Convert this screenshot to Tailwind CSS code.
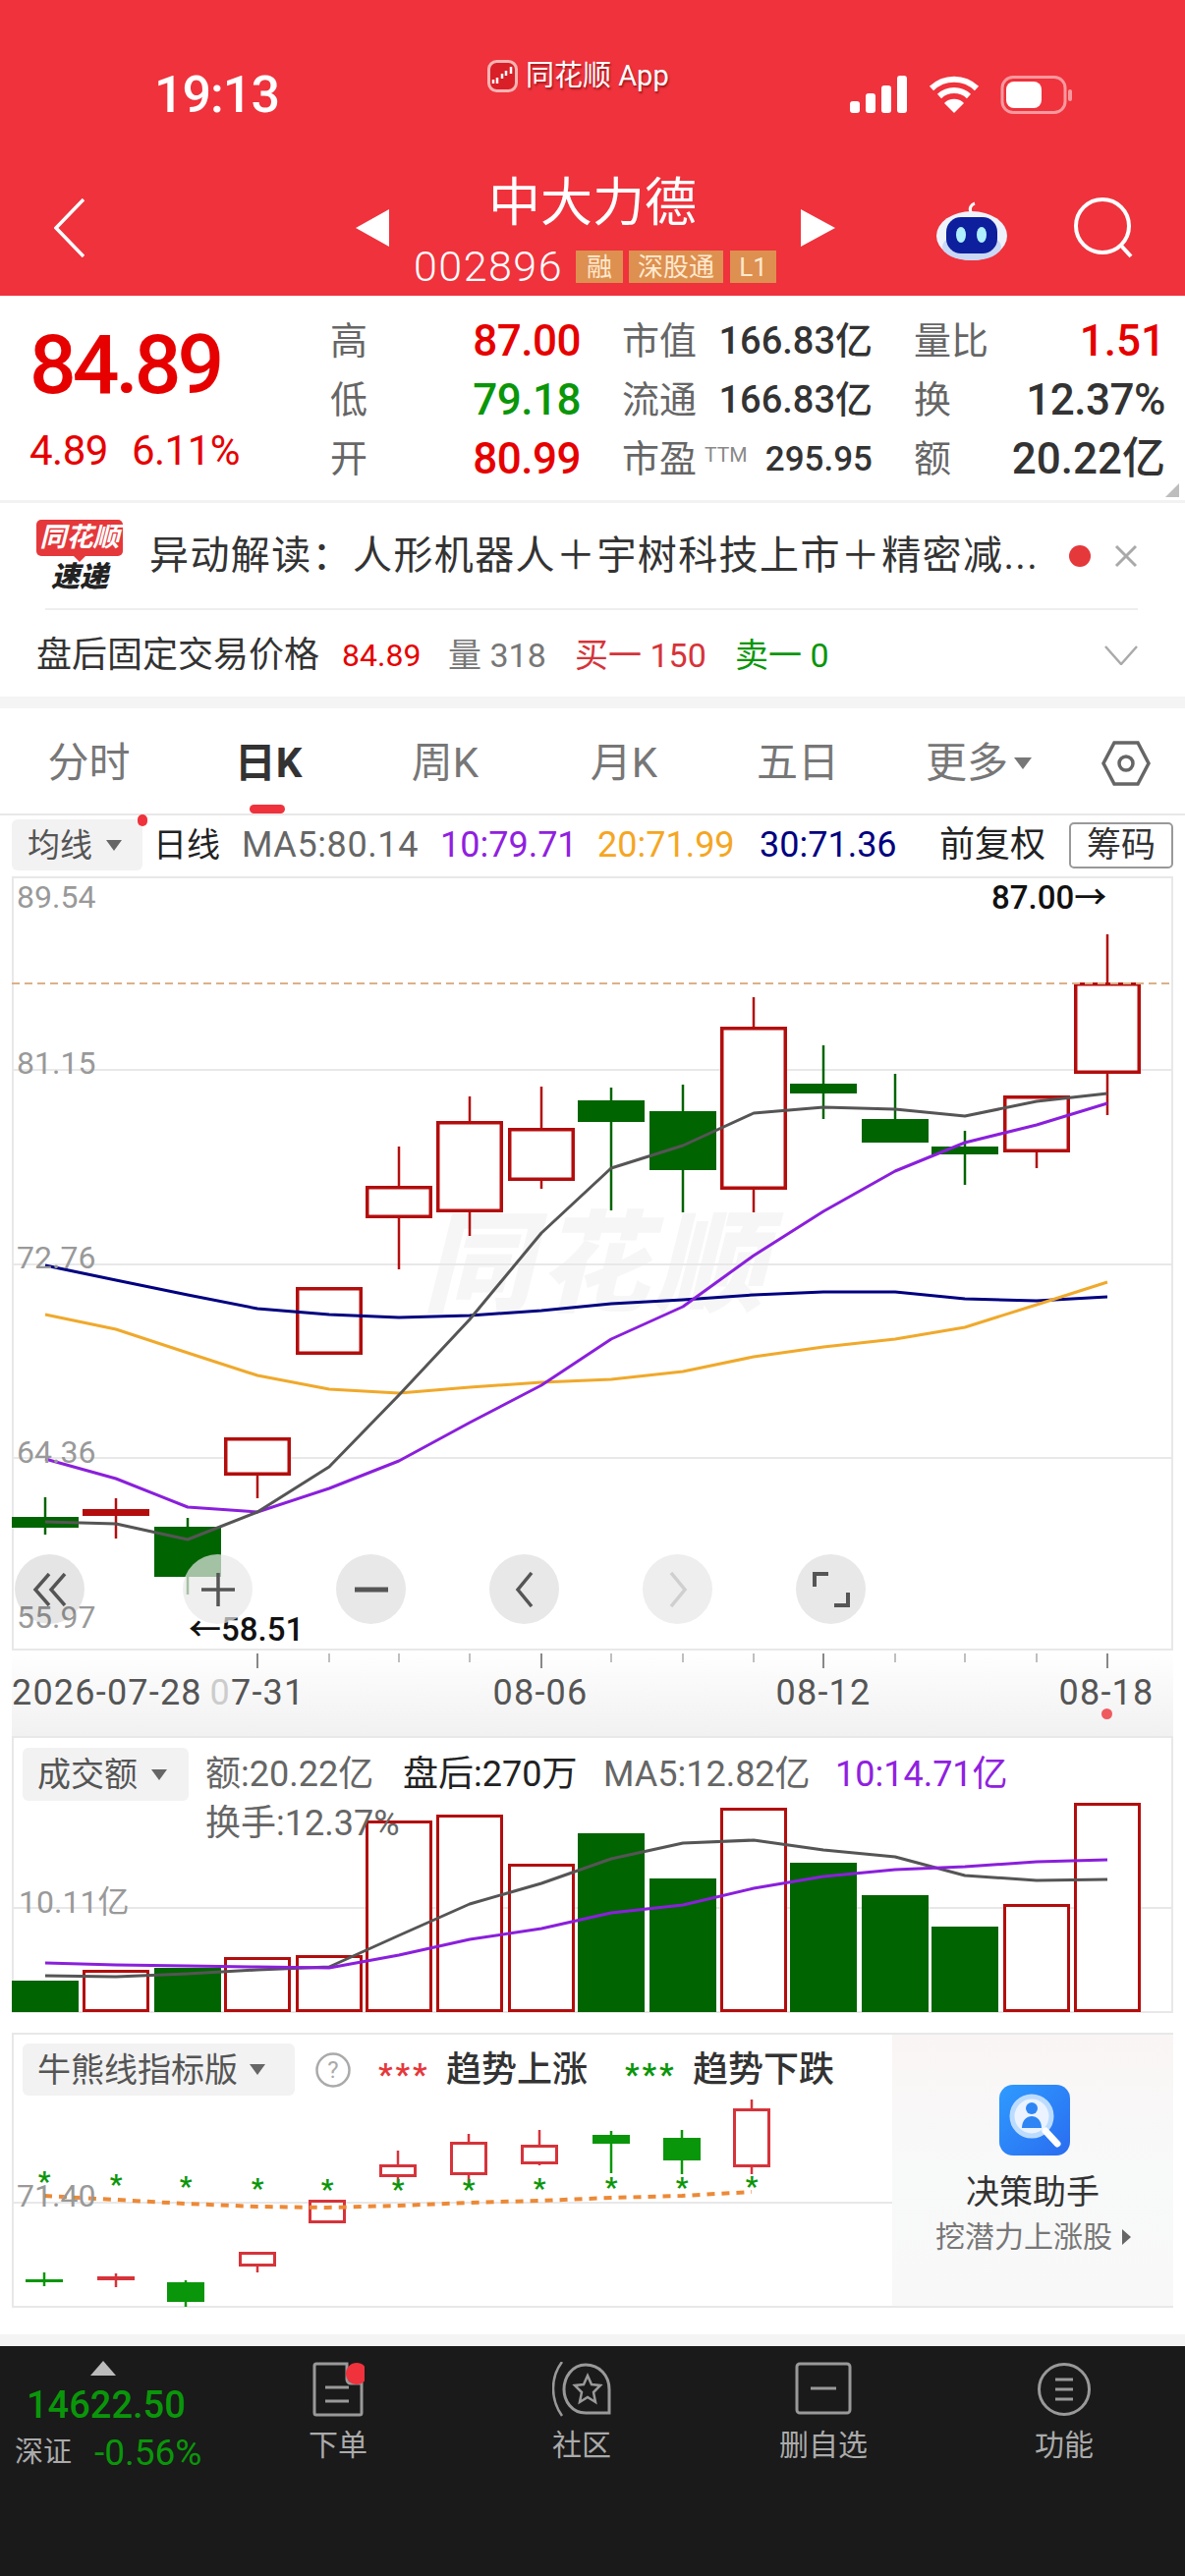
<!DOCTYPE html>
<html lang="zh-CN">
<head>
<meta charset="UTF-8">
<title>中大力德 - 日K</title>
<script src="https://cdn.jsdelivr.net/npm/@tailwindcss/browser@4"></script>
</head>
<body class="bg-white w-[1206px] h-[2622px] overflow-hidden leading-none font-['Roboto','Noto_Sans_CJK_SC',sans-serif]">

<!-- red header -->
<header class="h-[301px] bg-[#ef323c] text-white flex flex-col">
  <div class="flex items-center h-[74px] mt-[60px]">
    <div class="ml-[157px] w-[339px] text-[52px] font-medium tracking-[-1px]">19:13</div>
    <div class="w-[369px] flex items-center gap-[8px] -mt-[40px] text-[29px] [text-shadow:1px_2px_2px_rgba(90,0,0,.55)]">
      <svg width="31" height="33" viewBox="0 0 31 33"><rect x="1.5" y="1.5" width="28" height="30" rx="8" fill="#d92028" stroke="#f8b4b4" stroke-width="3"/><path d="M6 24v-4M10 24v-6M15 19v-5M19 16v-5M24 14V7" stroke="#fff" stroke-width="2.5"/></svg>
      <span>同花顺 App</span>
    </div>
    <svg width="227" height="40" viewBox="0 0 227 40">
      <rect x="0" y="26" width="10" height="12" rx="3" fill="#fff"/><rect x="16" y="18" width="10" height="20" rx="3" fill="#fff"/><rect x="32" y="10" width="10" height="28" rx="3" fill="#fff"/><rect x="48" y="0" width="10" height="38" rx="3" fill="#fff"/>
      <path d="M83 13a33 33 0 0 1 46 0M91 21a22 22 0 0 1 30 0" fill="none" stroke="#fff" stroke-width="6"/><path d="M96 28a14 14 0 0 1 20 0l-10 10z" fill="#fff"/>
      <rect x="155" y="1.5" width="64" height="36" rx="11" fill="none" stroke="#fff" stroke-opacity=".5" stroke-width="3"/><rect x="159" y="6" width="36" height="27" rx="8" fill="#fff"/><rect x="222" y="14" width="4" height="12" rx="2" fill="#fff" fill-opacity=".5"/>
    </svg>
  </div>
  <div class="flex items-center h-[120px] mt-[38px]">
    <svg class="ml-[55px]" width="31" height="60" viewBox="0 0 31 60"><path d="M30 1 2 30l28 29" fill="none" stroke="#fff" stroke-width="3.5"/></svg>
    <svg class="ml-[276px]" width="34" height="38" viewBox="0 0 34 38"><path d="M34 0v38L0 19z" fill="#fff"/></svg>
    <div class="w-[419px] flex flex-col items-center">
      <div class="text-[53px] font-normal h-[62px] leading-[62px] -ml-[5px]">中大力德</div>
      <div class="flex items-center mt-[17px] h-[33px]">
        <span class="text-[43px] font-light tracking-[1.5px] mr-[13px]">002896</span>
        <span class="bg-[#dd9050] text-[#ffe9cf] text-[26px] h-[33px] w-[48px] flex items-center justify-center mr-[6px]">融</span>
        <span class="bg-[#dd9050] text-[#ffe9cf] text-[26px] h-[33px] w-[96px] flex items-center justify-center mr-[7px]">深股通</span>
        <span class="bg-[#dd9050] text-[#ffe9cf] text-[26px] h-[33px] w-[47px] flex items-center justify-center">L1</span>
      </div>
    </div>
    <svg width="35" height="38" viewBox="0 0 35 38"><path d="M0 0v38l35-19z" fill="#fff"/></svg>
    <svg class="ml-[102px]" width="75" height="67" viewBox="0 0 75 67">
      <path d="M37 18c-4-5 0-9 3-10" fill="none" stroke="#fff" stroke-width="3"/>
      <ellipse cx="37" cy="41" rx="36" ry="25" fill="#eef2fb"/><ellipse cx="37" cy="52" rx="30" ry="14" fill="#c9d8f5"/>
      <rect x="11" y="22" width="52" height="37" rx="15" fill="#0d1f9c"/>
      <ellipse cx="26" cy="40" rx="5" ry="8" fill="#aef0ff"/><ellipse cx="47" cy="40" rx="5" ry="8" fill="#aef0ff"/>
    </svg>
    <svg class="ml-[65px]" width="62" height="62" viewBox="0 0 62 62"><circle cx="30" cy="29" r="27" fill="none" stroke="#fff" stroke-width="4"/><path d="m49 49 10 11" stroke="#fff" stroke-width="4"/></svg>
  </div>
</header>

<!-- quote block -->
<section class="relative h-[211px] flex border-b-[3px] border-[#f2f2f2]">
  <div class="w-[336px] pl-[30px] text-[#e60000]">
    <div class="mt-[28px] text-[84px] font-medium tracking-[-4px] h-[86px] leading-[86px]">84.89</div>
    <div class="mt-[23px] text-[42px] flex gap-[24px] tracking-[-.5px]"><span>4.89</span><span>6.11%</span></div>
  </div>
  <div class="grid grid-cols-[255px_255px_256px] gap-x-[42px] auto-rows-[60px] pt-[16px] items-center text-[44px] font-medium text-[#333]">
    <div class="flex justify-between items-center"><span class="text-[38px] font-normal text-[#666]">高</span><span class="text-[#e60000] tracking-[-.5px]">87.00</span></div>
    <div class="flex justify-between items-center"><span class="text-[38px] font-normal text-[#666]">市值</span><span class="text-[38px]">166.83亿</span></div>
    <div class="flex justify-between items-center"><span class="text-[38px] font-normal text-[#666]">量比</span><span class="text-[#e60000]">1.51</span></div>
    <div class="flex justify-between items-center"><span class="text-[38px] font-normal text-[#666]">低</span><span class="text-[#0a960a] tracking-[-.5px]">79.18</span></div>
    <div class="flex justify-between items-center"><span class="text-[38px] font-normal text-[#666]">流通</span><span class="text-[38px]">166.83亿</span></div>
    <div class="flex justify-between items-center"><span class="text-[38px] font-normal text-[#666]">换</span><span class="tracking-[-.5px]">12.37%</span></div>
    <div class="flex justify-between items-center"><span class="text-[38px] font-normal text-[#666]">开</span><span class="text-[#e60000] tracking-[-.5px]">80.99</span></div>
    <div class="flex items-center"><span class="text-[38px] font-normal text-[#666]">市盈</span><span class="text-[21px] font-normal text-[#888] ml-[8px] mb-[8px]">TTM</span><span class="text-[35px] ml-auto">295.95</span></div>
    <div class="flex justify-between items-center"><span class="text-[38px] font-normal text-[#666]">额</span><span>20.22亿</span></div>
  </div>
  <div class="absolute right-[6px] bottom-[3px] w-0 h-0 border-l-[14px] border-l-transparent border-b-[14px] border-b-[#bdbdbd]"></div>
</section>

<!-- news + after-hours -->
<section class="h-[197px] pl-[37px] pr-[48px]">
  <div class="flex items-center h-[107px]">
    <div class="w-[88px] flex flex-col items-center">
      <div class="relative w-[88px] h-[37px] rounded-[5px] bg-[#e5383b] text-white text-[27px] font-bold italic flex items-center justify-center">同花顺<i class="absolute -bottom-[6px] w-0 h-0 border-x-[6px] border-x-transparent border-t-[6px] border-t-[#e5383b]"></i></div>
      <div class="mt-[7px] text-[29px] font-black italic text-[#222]">速递</div>
    </div>
    <div class="ml-[27px] w-[910px] text-[40px] text-[#333] tracking-[1.4px] whitespace-nowrap">异动解读：人形机器人＋宇树科技上市＋精密减...</div>
    <div class="ml-[27px] w-[22px] h-[22px] rounded-full bg-[#e5383b]"></div>
    <svg class="ml-[24px]" width="24" height="24" viewBox="0 0 24 24"><path d="m2 2 20 20M22 2 2 22" stroke="#a9a9a9" stroke-width="3"/></svg>
  </div>
  <div class="h-[2px] bg-[#eee] ml-[9px]"></div>
  <div class="flex items-center h-[88px] pt-[4px] text-[36px] text-[#333]">
    <span class="w-[311px]">盘后固定交易价格</span>
    <span class="text-[32px] text-[#e60000] w-[108px]">84.89</span>
    <span class="text-[34px] text-[#777] w-[129px]">量 318</span>
    <span class="text-[34px] text-[#d6333a] w-[163px]">买一 150</span>
    <span class="text-[34px] text-[#0a960a]">卖一 0</span>
    <svg class="ml-auto" width="34" height="20" viewBox="0 0 34 20"><path d="m1 1 16 18L33 1" fill="none" stroke="#aaa" stroke-width="2.5"/></svg>
  </div>
</section>
<div class="h-[12px] bg-[#f4f4f4]"></div>

<!-- period tabs -->
<nav class="h-[109px] border-b-2 border-[#e8e8e8] grid grid-cols-[181px_184px_176px_188px_166px_202px_98px] items-center text-center text-[42px] text-[#777] pt-[4px] relative">
  <span>分时</span>
  <span class="relative font-bold text-[#333]">日K<i class="absolute left-[73px] top-[63px] w-[36px] h-[9px] rounded-full bg-[#ef323c]"></i></span>
  <span>周K</span>
  <span>月K</span>
  <span>五日</span>
  <span class="flex items-center justify-center gap-[6px]">更多<i class="w-0 h-0 border-x-[9px] border-x-transparent border-t-[12px] border-t-[#777]"></i></span>
  <svg class="mx-auto" width="50" height="46" viewBox="0 0 50 46"><path d="M13 2h24l11 21-11 21H13L2 23z" fill="none" stroke="#666" stroke-width="3.5"/><circle cx="25" cy="23" r="7" fill="none" stroke="#666" stroke-width="3.5"/></svg>
</nav>

<!-- MA legend row -->
<div class="relative flex items-center h-[60px] pl-[12px] text-[36px] whitespace-nowrap">
  <div class="relative h-[52px] w-[133px] rounded-[6px] bg-[#f2f2f2] flex items-center pl-[16px] gap-[14px] text-[33px] text-[#555]">均线<i class="w-0 h-0 border-x-[8px] border-x-transparent border-t-[11px] border-t-[#666]"></i><i class="absolute -right-[5px] -top-[5px] w-[10px] h-[12px] rounded-full bg-[#ef323c]"></i></div>
  <span class="ml-[11px] w-[90px] text-[34px] text-[#222]">日线</span>
  <span class="w-[202px] tracking-[.6px] text-[#666]">MA5:80.14</span>
  <span class="w-[160px] text-[#9020e0]">10:79.71</span>
  <span class="w-[165px] text-[#f5a623]">20:71.99</span>
  <span class="w-[183px] text-[#000080]">30:71.36</span>
  <span class="w-[132px] text-[#222]">前复权</span>
  <span class="w-[106px] h-[47px] flex items-center justify-center border-2 border-[#999] rounded-[5px] text-[35px] text-[#333]">筹码</span>
</div>

<!-- candle chart -->
<div class="relative h-[788px] mx-[12px] mt-[2px] border-2 border-[#e8e8e8]">
  <div class="absolute left-[416px] top-[338px] text-[112px] font-black italic text-[#f6f6f6] tracking-[6px]">同花顺</div>
  <svg id="kline" class="absolute -left-[2px] -top-[2px]" width="1182" height="788" viewBox="12 892 1182 788"></svg>
  <span class="absolute left-[3px] top-[3px] text-[32px] text-[#999]">89.54</span>
  <span class="absolute left-[3px] top-[172px] text-[32px] text-[#999]">81.15</span>
  <span class="absolute left-[3px] top-[370px] text-[32px] text-[#999]">72.76</span>
  <span class="absolute left-[3px] top-[568px] text-[32px] text-[#999]">64.36</span>
  <span class="absolute left-[3px] top-[736px] text-[32px] text-[#999]">55.97</span>
  <span class="absolute left-[995px] top-[3px] text-[33px] font-medium text-[#111]">87.00→</span>
  <span class="absolute left-[178px] top-[748px] text-[33px] font-medium text-[#111]">←58.51</span>
  <!-- zoom / pan controls -->
  <div class="absolute left-[1px] top-[688px] flex gap-[85px]">
    <div class="w-[71px] h-[71px] rounded-full bg-black/10 flex items-center justify-center"><svg width="36" height="34" viewBox="0 0 36 34"><path d="M17 1 3 17l14 16M33 1 19 17l14 16" fill="none" stroke="#555" stroke-width="3.5"/></svg></div>
    <div class="w-[71px] h-[71px] rounded-full bg-[#e8e8e8]/70 flex items-center justify-center ml-[15px]"><svg width="34" height="34" viewBox="0 0 34 34"><path d="M17 0v34M0 17h34" stroke="#555" stroke-width="3.5"/></svg></div>
    <div class="w-[71px] h-[71px] rounded-full bg-[#e8e8e8] flex items-center justify-center"><svg width="34" height="6" viewBox="0 0 34 6"><path d="M0 3h34" stroke="#555" stroke-width="5"/></svg></div>
    <div class="w-[71px] h-[71px] rounded-full bg-[#e8e8e8] flex items-center justify-center"><svg width="20" height="36" viewBox="0 0 20 36"><path d="M17 1 3 18l14 17" fill="none" stroke="#555" stroke-width="3.5"/></svg></div>
    <div class="w-[71px] h-[71px] rounded-full bg-[#eeeeee] flex items-center justify-center"><svg width="20" height="36" viewBox="0 0 20 36"><path d="m3 1 14 17L3 35" fill="none" stroke="#cfcfcf" stroke-width="3.5"/></svg></div>
    <div class="w-[71px] h-[71px] rounded-full bg-[#e8e8e8] flex items-center justify-center"><svg width="38" height="36" viewBox="0 0 38 36"><path d="M2 15V2h14M36 21v13H22" fill="none" stroke="#555" stroke-width="4"/></svg></div>
  </div>
</div>

<!-- date axis -->
<div class="relative h-[87px] mx-[12px] bg-gradient-to-b from-white to-[#f1f1f1] text-[36px] tracking-[1.2px] text-[#555] whitespace-nowrap">
  <svg class="absolute left-0 top-0" width="1182" height="20" viewBox="12 1680 1182 20"><path d="M262 1683v15M551 1683v15M838 1683v15M1127 1683v15" stroke="#888" stroke-width="2"/><path d="M335 1683v9M406 1683v9M478 1683v9M622 1683v9M695 1683v9M767 1683v9M911 1683v9M982 1683v9M1055 1683v9" stroke="#aaa" stroke-width="1.5"/></svg>
  <span class="absolute left-0 top-[25px]">2026-07-28</span>
  <span class="absolute left-[250px] top-[25px] -translate-x-1/2"><span class="text-[#ccc]">0</span>7-31</span>
  <span class="absolute left-[538px] top-[25px] -translate-x-1/2">08-06</span>
  <span class="absolute left-[826px] top-[25px] -translate-x-1/2">08-12</span>
  <span class="absolute left-[1114px] top-[25px] -translate-x-1/2">08-18</span>
  <i class="absolute left-[1109px] top-[59px] w-[11px] h-[11px] rounded-full bg-[#ef5a5f]"></i>
</div>

<!-- turnover panel -->
<div class="relative h-[282px] mx-[12px] border-x-2 border-y-2 border-[#e8e8e8]">
  <svg id="vol" class="absolute -left-[2px] -top-[2px]" width="1182" height="282" viewBox="12 1767 1182 282"></svg>
  <div class="relative flex items-center h-[54px] mt-[10px] text-[36px] text-[#666] whitespace-nowrap">
    <div class="ml-[9px] mr-[17px] w-[169px] h-[54px] rounded-[6px] bg-[#f2f2f2] flex items-center pl-[15px] gap-[14px] text-[34px] text-[#555]">成交额<i class="w-0 h-0 border-x-[8px] border-x-transparent border-t-[11px] border-t-[#666]"></i></div>
    <span class="w-[201px]">额:20.22亿</span>
    <span class="w-[204px] text-[#222]">盘后:270万</span>
    <span class="w-[236px]">MA5:12.82亿</span>
    <span class="text-[#9020e0]">10:14.71亿</span>
  </div>
  <span class="absolute left-[195px] top-[69px] text-[36px] text-[#666]">换手:12.37%</span>
  <span class="absolute left-[5px] top-[151px] text-[32px] text-[#999]">10.11亿</span>
</div>

<!-- bull/bear indicator panel -->
<div class="h-[280px] mx-[12px] mt-[20px] border-y-2 border-l-2 border-[#e8e8e8] flex">
  <div class="relative w-[894px]">
    <svg id="bull" class="absolute -left-[2px] -top-[2px]" width="896" height="280" viewBox="12 2069 896 280"></svg>
    <div class="relative flex items-center h-[53px] mt-[9px] text-[36px] whitespace-nowrap">
      <div class="ml-[9px] w-[277px] h-[53px] rounded-[6px] bg-[#f2f2f2] flex items-center pl-[15px] gap-[12px] text-[34px] text-[#555]">牛熊线指标版<i class="w-0 h-0 border-x-[8px] border-x-transparent border-t-[11px] border-t-[#666]"></i></div>
      <svg class="ml-[21px]" width="36" height="38" viewBox="0 0 36 38"><circle cx="18" cy="19" r="16.5" fill="none" stroke="#aaa" stroke-width="2.5"/><text x="18" y="27" text-anchor="middle" font-size="24" fill="#aaa">?</text></svg>
      <span class="ml-[28px] text-[#e5383b] font-bold w-[69px] text-[32px] tracking-[3px] mt-[8px]">***</span>
      <span class="font-medium text-[#333]">趋势上涨</span>
      <span class="ml-[38px] text-[#0a960a] font-bold w-[69px] text-[32px] tracking-[3px] mt-[8px]">***</span>
      <span class="font-medium text-[#333]">趋势下跌</span>
    </div>
    <span class="absolute left-[3px] top-[148px] text-[32px] text-[#999]">71.40</span>
  </div>
  <aside class="flex-1 bg-gradient-to-b from-[#faf5f5] via-[#f8f9f9] to-[#f8f8f8] flex flex-col items-center pt-[51px]">
    <svg class="ml-[3px]" width="72" height="72" viewBox="0 0 72 72"><defs><linearGradient id="aiBlue" x1="0" y1="0" x2="1" y2="1"><stop offset="0" stop-color="#2e9bff"/><stop offset="1" stop-color="#2a6cf0"/></linearGradient></defs><rect width="72" height="72" rx="14" fill="url(#aiBlue)"/><circle cx="33" cy="32" r="20" fill="#eaf3ff" stroke="#bcdcff" stroke-width="5"/><circle cx="33" cy="24" r="6" fill="#2e86f5"/><path d="M23 44c0-8 5-12 10-12s10 4 10 12z" fill="#2e86f5"/><path d="m47 47 12 13" stroke="#fff" stroke-width="7" stroke-linecap="round"/></svg>
    <div class="mt-[20px] text-[34px] text-[#333]">决策助手</div>
    <div class="mt-[14px] ml-[1px] text-[30px] text-[#777] flex items-center gap-[10px]">挖潜力上涨股<i class="w-0 h-0 border-y-[8px] border-y-transparent border-l-[9px] border-l-[#666]"></i></div>
  </aside>
</div>

<div class="h-[27px]"></div>
<div class="h-[12px] bg-[#f4f4f4]"></div>

<!-- bottom bar -->
<footer class="h-[234px] bg-[#1a1a1a] grid grid-cols-[220px_248px_248px_244px_246px] text-[#aaa] text-[30px]">
  <div class="flex flex-col pl-[15px] pt-[15px]">
    <i class="ml-[77px] w-0 h-0 border-x-[13px] border-x-transparent border-b-[15px] border-b-[#bbb]"></i>
    <span class="mt-[11px] ml-[12px] text-[38px] font-medium text-[#0a960a]">14622.50</span>
    <div class="mt-[11px] flex items-center"><span class="text-[29px] w-[81px]">深证</span><span class="text-[37px] text-[#0a960a]">-0.56%</span></div>
  </div>
  <div class="flex flex-col items-center pt-[16px]">
    <svg width="54" height="56" viewBox="0 0 54 56"><path d="M36 2H5a2 2 0 0 0-2 2v48a2 2 0 0 0 2 2h44a2 2 0 0 0 2-2V22H40a4 4 0 0 1-4-4z" fill="none" stroke="#999" stroke-width="3"/><path d="M14 26h24M14 40h24" stroke="#999" stroke-width="3"/><circle cx="46" cy="12" r="11" fill="#ef323c"/></svg>
    <span class="mt-[14px]">下单</span>
  </div>
  <div class="flex flex-col items-center pt-[16px]">
    <svg width="60" height="56" viewBox="0 0 60 56"><path d="M10 0C-2 16-2 38 10 55" fill="none" stroke="#999" stroke-width="2.5"/><path d="M58 52H34C20 52 12 40 12 28S20 3 34 3s24 11 24 25z" fill="none" stroke="#999" stroke-width="3"/><path d="m36 14 4 9 9 1-7 7 2 10-8-5-8 5 2-10-7-7 9-1z" fill="none" stroke="#999" stroke-width="2.5"/></svg>
    <span class="mt-[14px]">社区</span>
  </div>
  <div class="flex flex-col items-center pt-[16px]">
    <svg width="58" height="54" viewBox="0 0 58 54"><rect x="2" y="2" width="54" height="50" rx="3" fill="none" stroke="#999" stroke-width="3"/><path d="M16 27h26" stroke="#999" stroke-width="3"/></svg>
    <span class="mt-[16px]">删自选</span>
  </div>
  <div class="flex flex-col items-center pt-[16px]">
    <svg width="56" height="56" viewBox="0 0 56 56"><circle cx="28" cy="28" r="25.5" fill="none" stroke="#999" stroke-width="3"/><path d="M19 18h18M19 28h18M19 38h18" stroke="#999" stroke-width="3"/></svg>
    <span class="mt-[14px]">功能</span>
  </div>
</footer>

<script>
  const NS = 'http://www.w3.org/2000/svg';
  const RED = '#b30d0d', GREEN = '#006400';
  const XS = [46,118,191,262,335,406,478,551,622,695,767,838,911,982,1055,1127];

  function el(svg, tag, attrs, text) {
    const e = document.createElementNS(NS, tag);
    for (const k in attrs) e.setAttribute(k, attrs[k]);
    if (text) e.textContent = text;
    svg.appendChild(e);
  }
  function hline(svg, y, x1, x2, color, extra) {
    el(svg, 'line', Object.assign({x1: x1, x2: x2, y1: y, y2: y, stroke: color, 'stroke-width': 2}, extra || {}));
  }
  function poly(svg, xs, ys, color, width, extra) {
    const pts = ys.map((y, i) => xs[i] + ',' + y).join(' ');
    el(svg, 'polyline', Object.assign({points: pts, fill: 'none', stroke: color, 'stroke-width': width, 'stroke-linejoin': 'round'}, extra || {}));
  }
  // one candle: x, body top, body bottom, wick top, wick bottom, up?
  function candle(svg, c, w, red, green, sw) {
    const [x, top, bot, wt, wb, up] = c;
    const color = up ? red : green;
    el(svg, 'line', {x1: x, x2: x, y1: wt, y2: wb, stroke: color, 'stroke-width': 2.5});
    if (up) el(svg, 'rect', {x: x - w/2 + sw/2, y: top + sw/2, width: w - sw, height: Math.max(bot - top - sw, 1), fill: '#fff', stroke: color, 'stroke-width': sw});
    else el(svg, 'rect', {x: x - w/2, y: top, width: w, height: Math.max(bot - top, 3), fill: color});
  }

  // daily K chart
  const kline = document.getElementById('kline');
  [1089, 1287, 1484].forEach(y => hline(kline, y, 12, 1194, '#e8e8e8'));
  [[46,1544,1555,1524,1562,0],[118,1536,1543,1525,1566,1],[191,1554,1605,1545,1623,0],[262,1463,1502,1463,1525,1],
   [335,1310,1379,1310,1379,1],[406,1207,1240,1167,1292,1],[478,1141,1234,1116,1258,1],[551,1148,1202,1106,1210,1],
   [622,1120,1142,1107,1232,0],[695,1131,1191,1104,1234,0],[767,1045,1211,1015,1234,1],[838,1103,1113,1064,1139,0],
   [911,1139,1163,1093,1139,0],[982,1167,1175,1151,1206,0],[1055,1115,1173,1115,1189,1],[1127,1000,1093,951,1135,1]
  ].forEach(c => candle(kline, c, 68, RED, GREEN, 3.5));
  poly(kline, XS, [1288,1303,1318,1332,1338,1341,1339,1334,1327,1323,1318,1315,1315,1322,1324,1320], '#000080', 3);
  poly(kline, XS, [1338,1353,1377,1400,1414,1418,1412,1407,1404,1396,1381,1371,1363,1351,1328,1305], '#f0a92b', 3);
  poly(kline, XS, [1485,1505,1534,1539,1515,1487,1448,1410,1363,1330,1278,1233,1192,1163,1145,1123], '#8a1fdc', 3);
  poly(kline, XS, [1549,1551,1567,1539,1493,1420,1343,1255,1189,1166,1133,1127,1129,1136,1121,1113], '#555', 3);
  hline(kline, 1001, 12, 1194, '#dcb088', {'stroke-dasharray': '8 5'});

  // turnover chart
  const vol = document.getElementById('vol');
  hline(vol, 1942, 12, 1194, '#e8e8e8');
  const tops = [2016,2005,2003,1992,1990,1853,1847,1897,1866,1912,1840,1896,1929,1961,1938,1835];
  const ups = [0,1,0,1,1,1,1,1,0,0,1,0,0,0,1,1];
  tops.forEach((t, i) => candle(vol, [XS[i], t, 2048, t, 2048, ups[i]], 68, RED, GREEN, 3));
  poly(vol, XS, [2011,2012,2009,2005,2002,1970,1938,1917,1892,1876,1873,1883,1890,1909,1914,1913], '#555', 3);
  poly(vol, XS, [1998,2000,2001,2002,2003,1990,1974,1963,1947,1939,1922,1910,1903,1900,1895,1893], '#8a1fdc', 3);

  // bull/bear indicator
  const bull = document.getElementById('bull');
  const MX = [45,118,189,262,333,405,477,549,622,694,765];
  hline(bull, 2242, 12, 908, '#e8e8e8');
  const RD = '#d6333a', GN = '#0a960a';
  [[45,2320,2322,2313,2327,0],[118,2317,2319,2314,2328,1],[189,2323,2343,2321,2348,0],[262,2292,2307,2292,2313,1],
   [333,2239,2263,2239,2263,1],[405,2203,2216,2189,2223,1],[477,2180,2214,2172,2223,1],[549,2183,2203,2168,2204,1],
   [622,2173,2182,2169,2212,0],[694,2176,2199,2168,2213,0],[765,2146,2206,2137,2213,1]
  ].forEach(c => candle(bull, c, 38, RD, GN, 3));
  poly(bull, MX, [2235,2239,2243,2246,2247,2245,2242,2240,2237,2235,2231], '#ed8936', 4, {'stroke-dasharray': '8 7'});
  [2218,2221,2223,2225,2226,2226,2226,2225,2224,2224,2223].forEach((y, i) => {
    el(bull, 'text', {x: MX[i], y: y + 12, 'text-anchor': 'middle', 'font-size': 28, 'font-weight': 700, fill: GN}, '*');
  });
</script>
</body>
</html>
